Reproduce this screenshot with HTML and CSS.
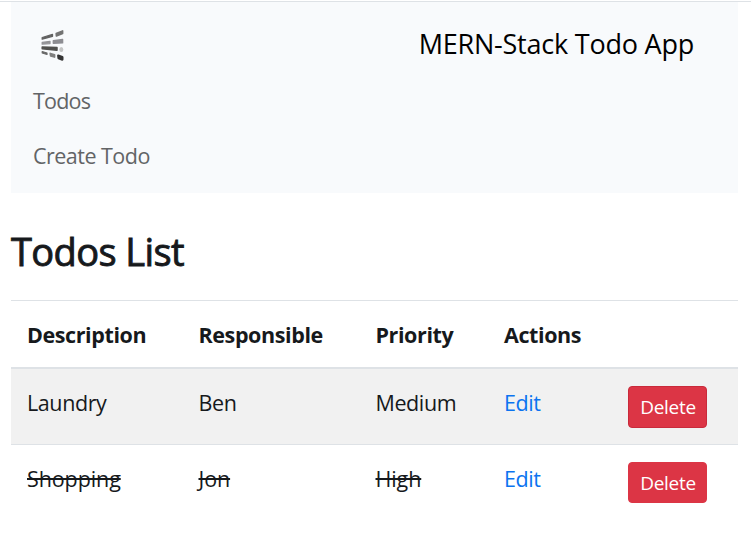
FILE: index.html
```html
<!DOCTYPE html>
<html lang="en">
<head>
<meta charset="utf-8">
<title>MERN-Stack Todo App</title>
<link rel="stylesheet" href="styles.css">
</head>
<body>
<div class="container">
  <nav class="navbar">
    <div class="navbar-top">
      <svg class="logo" viewBox="0 0 26 34" width="26" height="34">
        <path d="M2.2 9.5L12.5 6.4V8.3L2.2 11.2z" fill="#626262" stroke="#626262" stroke-width="1.3"/>
        <path d="M16.2 5.6L22.6 2.9V5.6L16.4 8z" fill="#737373" stroke="#737373" stroke-width="1.6"/>
        <path d="M2.2 14.4L10 13.5V15.6L2.2 16.1z" fill="#929296" stroke="#929296" stroke-width="1.3"/>
        <path d="M13.3 12.7L22.6 11.5V14.9L13.3 15.2z" fill="#8d8d92" stroke="#8d8d92" stroke-width="1.4"/>
        <path d="M2.2 19L17 19.5V22.3L2.2 20.7z" fill="#50504e" stroke="#50504e" stroke-width="1.5"/>
        <ellipse cx="21.3" cy="21.4" rx="2" ry="2.5" fill="#c4c5c5"/>
        <path d="M2.2 23.5L7 25V26.5L2.2 25z" fill="#686868" stroke="#686868" stroke-width="1.2"/>
        <path d="M10.3 25.5L14.5 26.8V29L10.7 27.8z" fill="#808080" stroke="#808080" stroke-width="1.8"/>
        <path d="M18.2 27.6L22.4 29V31.6L18.5 30.2z" fill="#353535" stroke="#353535" stroke-width="2.2"/>
      </svg>
      <a class="brand">MERN-Stack Todo App</a>
    </div>
    <a class="nav-link nav-todos">Todos</a>
    <a class="nav-link nav-create">Create Todo</a>
  </nav>
  <h3 class="heading">Todos List</h3>
  <table class="table">
    <colgroup><col class="c1"><col class="c2"><col class="c3"><col class="c4"><col></colgroup>
    <thead>
      <tr><th>Description</th><th>Responsible</th><th>Priority</th><th>Actions</th><th></th></tr>
    </thead>
    <tbody>
      <tr class="striped"><td>Laundry</td><td>Ben</td><td>Medium</td><td><a class="edit">Edit</a></td><td class="action"><button class="btn">Delete</button></td></tr>
      <tr><td><span class="completed wide">Shopping</span></td><td><span class="completed wide">Jon</span></td><td><span class="completed wide">High</span></td><td><a class="edit">Edit</a></td><td class="action"><button class="btn last">Delete</button></td></tr>
    </tbody>
  </table>
</div>
</body>
</html>
```
FILE: styles.css
```css
* { box-sizing: border-box; }
body {
  margin: 0;
  padding-top: 1px;
  background: #fff;
  color: #16191c;
  font: 21.5px/33px "Open Sans", "Noto Sans", sans-serif;
  letter-spacing: -0.4px;
}
.container {
  border-top: 1px solid #dee2e6;
  padding: 0 13px 0 11px;
}
.navbar {
  height: 191px;
  padding: 22px 44px 0 22px;
  background: #f8fafc;
}
.navbar-top {
  display: flex;
  justify-content: space-between;
  height: 49px;
  padding-left: 7px;
}
.logo {
  margin-top: 4px;
  stroke-linejoin: round;
}
.brand {
  color: #000;
  font-size: 27px;
  line-height: 40px;
  letter-spacing: -0.22px;
}
.nav-link {
  display: block;
  width: max-content;
  height: 55px;
  padding-top: 11px;
  color: #626466;
}
.nav-todos { letter-spacing: -0.8px; }
.nav-create { letter-spacing: -0.52px; }
.heading {
  margin: 0;
  height: 107px;
  padding-top: 33px;
  font-size: 38px;
  font-weight: 400;
  line-height: 50px;
  letter-spacing: -0.6px;
  -webkit-text-stroke: 0.9px #16191c;
}
.table {
  width: 727px;
  table-layout: fixed;
  border-collapse: separate;
  border-spacing: 0;
}
.c1 { width: 171.5px; }
.c2 { width: 177px; }
.c3 { width: 128.5px; }
.c4 { width: 124px; }
th {
  height: 69px;
  padding: 0 16px;
  border-top: 1px solid #dee2e6;
  border-bottom: 2px solid #dee2e6;
  font-weight: 700;
  text-align: left;
}
td {
  height: 75px;
  padding: 17px 16px 0;
  vertical-align: top;
  white-space: nowrap;
}
.striped td {
  height: 76px;
  border-bottom: 1px solid #dee2e6;
  background: #f1f1f1;
}
.completed {
  text-decoration: line-through;
  text-decoration-thickness: 2px;
}
.wide { letter-spacing: -0.1px; }
.edit { color: #0b74f0; }
.btn {
  display: block;
  width: 79px;
  height: 42px;
  padding: 0 0 0 1px;
  border: 1px solid #c92a3b;
  border-radius: 4px;
  background: #dc3545;
  color: #fff;
  font: 19px/26px "Open Sans", sans-serif;
  letter-spacing: -0.3px;
}
.last {
  height: 41px;
  border-color: #dc3545;
}
```
